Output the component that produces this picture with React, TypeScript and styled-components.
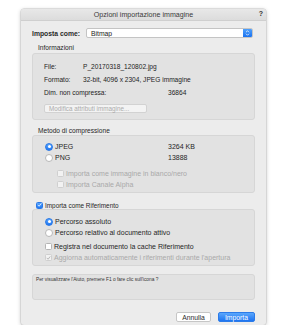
import styled, { createGlobalStyle } from 'styled-components';

const GlobalStyle = createGlobalStyle`
  html, body {
    margin: 0;
    padding: 0;
    background: #ffffff;
    font-family: "Liberation Sans", Arial, sans-serif;
    color: #222;
  }
`;

const Dialog = styled.div`
  margin: 9px 0 0 21px;
  width: 245px;
  height: 316px;
  background: #ececec;
  border-radius: 3px;
  box-shadow: 0 0 0 0.5px #c8c8c8, 0 1px 4px rgba(0, 0, 0, 0.25);
  display: flex;
  flex-direction: column;
  overflow: hidden;
`;

const TitleBar = styled.div`
  position: relative;
  height: 11px;
  background: linear-gradient(#e8e8e8, #dcdcdc);
  border-bottom: 0.5px solid #cfcfcf;
  display: flex;
  align-items: center;
  justify-content: center;
  font-size: 7.1px;
  color: #3a3a3a;
`;

const HelpMark = styled.span`
  position: absolute;
  right: 3px;
  top: 1px;
  font-size: 7px;
  font-weight: bold;
  color: #333;
`;

const Body = styled.div`
  flex: 1;
  display: flex;
  flex-direction: column;
  padding: 0 11px;
`;

const TopRow = styled.div`
  margin-top: 7px;
  height: 10px;
  display: flex;
  align-items: center;
`;

const TopLabel = styled.span`
  font-size: 6.8px;
  font-weight: bold;
  color: #2a2a2a;
  width: 54px;
`;

const Popup = styled.div`
  flex: 1;
  height: 10px;
  margin-right: 2px;
  background: #fff;
  border: 0.5px solid #c4c4c4;
  border-radius: 2px;
  display: flex;
  align-items: center;
  box-sizing: border-box;
  font-size: 6.8px;
  padding-left: 4px;
  overflow: hidden;
`;

const PopupText = styled.span`
  flex: 1;
`;

const Stepper = styled.span`
  width: 9px;
  height: 100%;
  background: linear-gradient(#4fa0fb, #1a72f0);
  display: flex;
  align-items: center;
  justify-content: center;
`;

const GroupLabel = styled.div<{ $top: number }>`
  margin-top: ${p => p.$top}px;
  height: 8px;
  line-height: 8px;
  font-size: 6.6px;
  padding-left: 6px;
  color: #262626;
`;

const Group = styled.div<{ $top?: number }>`
  margin-top: ${p => p.$top ?? 0}px;
  background: #e2e2e2;
  border: 0.5px solid #d6d6d6;
  border-radius: 3px;
  display: flex;
  flex-direction: column;
`;

const InfoGroup = styled(Group)`
  padding: 6px 0 6px 11px;
`;

const InfoRow = styled.div<{ $label: number }>`
  height: 13px;
  display: grid;
  grid-template-columns: ${p => p.$label}px 1fr;
  align-items: center;
  font-size: 6.6px;
`;

const GhostButton = styled.div`
  margin-top: 5px;
  width: 103px;
  height: 9px;
  box-sizing: border-box;
  background: #f3f3f3;
  border: 0.5px solid #d2d2d2;
  border-radius: 2px;
  font-size: 6.3px;
  color: #ababab;
  padding-left: 4px;
  line-height: 8px;
  white-space: nowrap;
`;

const CompGroup = styled(Group)`
  padding: 5px 0 2px 12px;
`;

const OptionRow = styled.div<{ $indent?: number; $top?: number; $disabled?: boolean }>`
  height: 11px;
  margin-top: ${p => p.$top ?? 0}px;
  padding-left: ${p => p.$indent ?? 0}px;
  display: flex;
  align-items: center;
  font-size: 7px;
  white-space: nowrap;
  color: ${p => (p.$disabled ? '#a9a9a9' : '#262626')};
`;

const OptionText = styled.span<{ $width?: number }>`
  margin-left: 2px;
  width: ${p => (p.$width ? `${p.$width}px` : 'auto')};
`;

const Radio = styled.span<{ $on?: boolean }>`
  width: 8px;
  height: 8px;
  box-sizing: border-box;
  border-radius: 50%;
  flex-shrink: 0;
  background: ${p => (p.$on ? 'linear-gradient(#5aa6fc, #1f76f2)' : '#fff')};
  border: 0.5px solid ${p => (p.$on ? '#2a78e6' : '#b8b8b8')};
  display: flex;
  align-items: center;
  justify-content: center;
  &::after {
    content: '';
    width: 3px;
    height: 3px;
    border-radius: 50%;
    background: ${p => (p.$on ? '#fff' : 'transparent')};
  }
`;

const Check = styled.span<{ $on?: boolean; $disabled?: boolean }>`
  width: 7px;
  height: 7px;
  box-sizing: border-box;
  border-radius: 1.5px;
  flex-shrink: 0;
  background: ${p => (p.$on && !p.$disabled ? 'linear-gradient(#5aa6fc, #1f76f2)' : p.$disabled ? '#f2f2f2' : '#fff')};
  border: 0.5px solid ${p => (p.$on && !p.$disabled ? '#2a78e6' : p.$disabled ? '#cfcfcf' : '#b4b4b4')};
  display: flex;
  align-items: center;
  justify-content: center;
`;

const RefRow = styled.div`
  margin-top: 8px;
  height: 8px;
  padding-left: 4px;
  display: flex;
  align-items: center;
  font-size: 6.4px;
  color: #262626;
`;

const RefGroup = styled(Group)`
  padding: 6px 0 2px 12px;
`;

const HelpBox = styled.div`
  margin-top: 8px;
  height: 26px;
  box-sizing: border-box;
  background: #e2e2e2;
  border: 0.5px solid #d6d6d6;
  border-radius: 3px;
  padding: 2px 3px;
  font-size: 4.8px;
  color: #333;
  white-space: nowrap;
`;

const Footer = styled.div`
  margin-top: 12px;
  display: flex;
  justify-content: flex-end;
  gap: 7px;
`;

const Button = styled.div<{ $primary?: boolean; $width: number }>`
  width: ${p => p.$width}px;
  height: 10px;
  box-sizing: border-box;
  border-radius: 2px;
  display: flex;
  align-items: center;
  justify-content: center;
  font-size: 6.8px;
  color: ${p => (p.$primary ? '#fff' : '#2a2a2a')};
  background: ${p => (p.$primary ? 'linear-gradient(#5ba7fc, #1d74f1)' : '#fff')};
  border: 0.5px solid ${p => (p.$primary ? '#2c7be8' : '#c6c6c6')};
`;

const Tick = ({ color }: { color: string }) => (
  <svg width="6" height="6" viewBox="0 0 10 10">
    <path d="M2 5.3 L4.2 7.5 L8 2.5" fill="none" stroke={color} strokeWidth="1.6" strokeLinecap="round" strokeLinejoin="round" />
  </svg>
);

const Arrows = () => (
  <svg width="5" height="8" viewBox="0 0 10 16">
    <path d="M2.5 6 L5 3.5 L7.5 6 M2.5 10 L5 12.5 L7.5 10" fill="none" stroke="#fff" strokeWidth="1.5" strokeLinecap="round" strokeLinejoin="round" />
  </svg>
);

export default function App() {
  return (
    <>
      <GlobalStyle />
      <Dialog>
        <TitleBar>
          Opzioni importazione immagine
          <HelpMark>?</HelpMark>
        </TitleBar>
        <Body>
          <TopRow>
            <TopLabel>Imposta come:</TopLabel>
            <Popup>
              <PopupText>Bitmap</PopupText>
              <Stepper>
                <Arrows />
              </Stepper>
            </Popup>
          </TopRow>

          <GroupLabel $top={6}>Informazioni</GroupLabel>
          <InfoGroup $top={1}>
            <InfoRow $label={39}>
              <span>File:</span>
              <span>P_20170318_120802.jpg</span>
            </InfoRow>
            <InfoRow $label={39}>
              <span>Formato:</span>
              <span>32-bit, 4096 x 2304, JPEG immagine</span>
            </InfoRow>
            <InfoRow $label={124}>
              <span>Dim. non compressa:</span>
              <span>36864</span>
            </InfoRow>
            <GhostButton>Modifica attributi immagine...</GhostButton>
          </InfoGroup>

          <GroupLabel $top={7}>Metodo di compressione</GroupLabel>
          <CompGroup>
            <OptionRow>
              <Radio $on />
              <OptionText $width={113}>JPEG</OptionText>
              <span>3264 KB</span>
            </OptionRow>
            <OptionRow>
              <Radio />
              <OptionText $width={113}>PNG</OptionText>
              <span>13888</span>
            </OptionRow>
            <OptionRow $indent={12} $top={5} $disabled>
              <Check $disabled />
              <OptionText>Importa come immagine in bianco/nero</OptionText>
            </OptionRow>
            <OptionRow $indent={12} $disabled>
              <Check $disabled />
              <OptionText>Importa Canale Alpha</OptionText>
            </OptionRow>
          </CompGroup>

          <RefRow>
            <Check $on>
              <Tick color="#fff" />
            </Check>
            <OptionText>Importa come Riferimento</OptionText>
          </RefRow>
          <RefGroup>
            <OptionRow>
              <Radio $on />
              <OptionText>Percorso assoluto</OptionText>
            </OptionRow>
            <OptionRow>
              <Radio />
              <OptionText>Percorso relativo al documento attivo</OptionText>
            </OptionRow>
            <OptionRow $top={3}>
              <Check />
              <OptionText>Registra nel documento la cache Riferimento</OptionText>
            </OptionRow>
            <OptionRow $disabled>
              <Check $on $disabled>
                <Tick color="#a8a8a8" />
              </Check>
              <OptionText>Aggiorna automaticamente i riferimenti durante l'apertura</OptionText>
            </OptionRow>
          </RefGroup>

          <HelpBox>Per visualizzare l'Aiuto, premere F1 o fare clic sull'icona ?</HelpBox>

          <Footer>
            <Button $width={35}>Annulla</Button>
            <Button $primary $width={37}>Importa</Button>
          </Footer>
        </Body>
      </Dialog>
    </>
  );
}
